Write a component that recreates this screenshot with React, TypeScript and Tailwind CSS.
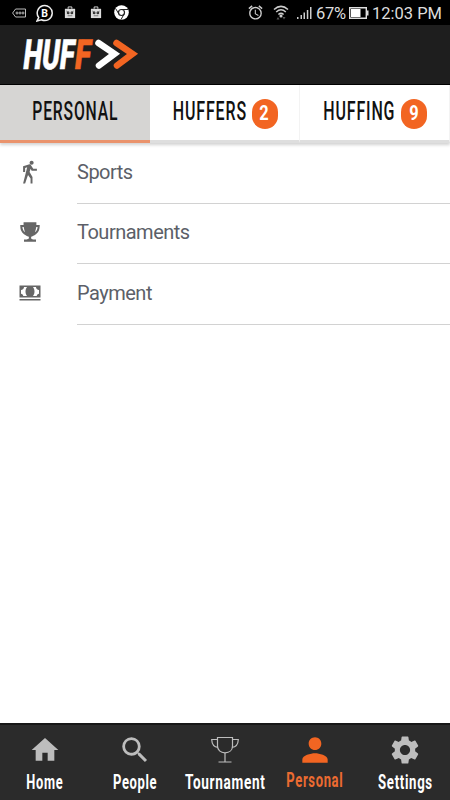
import type { ReactNode } from "react";
import clsx from "clsx";
import { MdAlarm, MdHome, MdPerson, MdSearch, MdSettings } from "react-icons/md";
import { IoMdCash, IoMdTrophy, IoMdWalk } from "react-icons/io";

const tabs = [
  { label: "PERSONAL", box: "w-[86px]", squeeze: "scale-x-[0.63]", active: true },
  { label: "HUFFERS", box: "w-[74px]", squeeze: "scale-x-[0.64]", count: 2 },
  { label: "HUFFING", box: "w-[73px]", squeeze: "scale-x-[0.64]", count: 9 },
];

const rows = [
  { label: "Sports", icon: <IoMdWalk className="-ml-px h-[26px] w-[26px]" /> },
  { label: "Tournaments", icon: <IoMdTrophy className="h-6 w-6" /> },
  { label: "Payment", icon: <IoMdCash className="h-6 w-6" /> },
];

const navItems = [
  { label: "Home", icon: <MdHome className="h-8 w-8" />, squeeze: "scale-x-[0.64]" },
  { label: "People", icon: <MdSearch className="h-[34px] w-[34px]" />, squeeze: "scale-x-[0.65]" },
  { label: "Tournament", icon: <TrophyOutline />, squeeze: "scale-x-[0.68]" },
  { label: "Personal", icon: <MdPerson className="h-[38px] w-[38px]" />, squeeze: "scale-x-[0.65]", active: true },
  { label: "Settings", icon: <MdSettings className="h-[34px] w-[34px]" />, squeeze: "scale-x-[0.66]" },
];

function TrophyOutline() {
  return (
    <svg className="h-7 w-7" viewBox="0 0 28 28" fill="none" stroke="currentColor" strokeWidth="1.2">
      <path d="M6.5 1.5h15v8.500c0 4-3 6.800-7.500 6.800S6.500 14 6.500 10z" />
      <path d="M6.500 3.500H.7c.2 4.500 2 7.500 6.300 7.800M21.500 3.500h5.800c-.2 4.500-2 7.500-6.300 7.800M14 17v8.500M7.500 26h13" />
    </svg>
  );
}

function Narrow({ box, squeeze, children }: { box?: string; squeeze: string; children: ReactNode }) {
  return (
    <span className={clsx("flex justify-center whitespace-nowrap", box)}>
      <span className={squeeze}>{children}</span>
    </span>
  );
}

function BagIcon() {
  return (
    <svg className="h-[13px] w-3" viewBox="0 0 12 14">
      <path d="M4 3V1h4v2" fill="none" stroke="#ddd" />
      <path d="M.5 3h11v10H.5z" fill="#ddd" />
      <circle cx="4" cy="7.500" r="1.500" fill="#333" />
      <circle cx="8" cy="7.500" r="1.500" fill="#333" />
      <path d="M2 5.500l3 1M10 5.500l-3 1M3.500 10.500h5" fill="none" stroke="#777" />
    </svg>
  );
}

function StatusBar() {
  return (
    <div className="flex h-[25px] items-center bg-black pl-3 pr-[9px] text-[#ddd]">
      <svg className="h-[10px] w-[14px]" viewBox="0 0 14 10" fill="none" stroke="#bbb">
        <path d="M.6 5l3-4h9.900v8H3.600z" />
        <circle cx="5" cy="5" r="1" />
        <circle cx="8" cy="5" r="1" />
        <circle cx="11" cy="5" r="1" />
      </svg>
      <svg className="ml-[10px] h-[18px] w-[17px]" viewBox="0 0 17 18">
        <path d="M2.700 13.500A7.500 7.500 0 1 1 5.500 15.800L1 17z" fill="none" stroke="#eee" strokeWidth="1.500" />
        <text x="8.700" y="12.600" textAnchor="middle" fill="#fff" fontFamily="Roboto, sans-serif" fontWeight="700" fontSize="10.500">B</text>
      </svg>
      <span className="ml-[11px]"><BagIcon /></span>
      <span className="ml-[14px]"><BagIcon /></span>
      <svg className="ml-3 h-[15px] w-[15px]" viewBox="0 0 15 15">
        <circle cx="7.500" cy="7.500" r="7.300" fill="#fff" />
        <circle cx="7.500" cy="7.500" r="3" fill="#fff" stroke="#222" strokeWidth="1.200" />
        <path d="M7.500 4.500H14M4.900 9L1.600 3.500M10.100 9L7 14.600" stroke="#222" />
      </svg>
      <div className="ml-auto flex items-center">
        <MdAlarm className="h-[17px] w-[17px] text-[#ccc]" />
        <svg className="ml-[9px] h-[17px] w-4" viewBox="0 0 16 17" fill="none" stroke="#ccc" strokeWidth="1.500">
          <path d="M1 5.500Q8-.8 15 5.500M3.200 8Q8 3.600 12.800 8M5.400 10.500Q8 8.300 10.600 10.500" />
          <circle cx="8" cy="12" r=".8" fill="#ccc" />
          <path d="M3.500 15.500h3L5 13zM9.500 13h3L11 15.500z" fill="#555" stroke="none" />
        </svg>
        <svg className="ml-2 h-3 w-[15px]" viewBox="0 0 15 12" fill="#ccc">
          <path d="M0 10h1.500v2H0zM3.500 8H5v4H3.500zM6.500 5.500H8V12H6.500zM9.800 3h1.500v9H9.800zM13 0h1.500v12H13z" />
        </svg>
        <span className="ml-1 mt-[3px] w-[30px] text-[16.500px] leading-none tracking-[-0.3px]">67%</span>
        <svg className="ml-[3px] h-3 w-5" viewBox="0 0 20 12">
          <path d="M.7.7h16.600v10.600H.7z" fill="none" stroke="#ddd" strokeWidth="1.400" />
          <path d="M2 2h9.500v8H2z" fill="#fff" />
          <path d="M18 3.500h1.500v5H18z" fill="#ddd" />
        </svg>
        <span className="ml-[3px] mt-[3px] w-[69px] whitespace-nowrap text-[16.500px] leading-none">12:03 PM</span>
      </div>
    </div>
  );
}

function Header() {
  return (
    <header className="flex h-[60px] items-center border-b border-black bg-[#1e1e1e] pl-[22px]">
      <svg className="h-[58px] w-[118px] overflow-visible" viewBox="0 0 118 58">
        <g transform="translate(0 43) skewX(-7)" fontFamily="Roboto, sans-serif" fontWeight="900" fontSize="41.500">
          <text x="0" y="0" fill="#fff" stroke="#fff" strokeWidth=".6" textLength="51" lengthAdjust="spacingAndGlyphs">HUF</text>
          <text x="51.500" y="0" fill="#f26522" stroke="#f26522" strokeWidth=".6" textLength="16" lengthAdjust="spacingAndGlyphs">F</text>
        </g>
        <path d="M76.500 17L92.500 27.800 77 39.500" fill="none" stroke="#fff" strokeWidth="6.500" strokeLinecap="round" />
        <path d="M94.500 17L110.500 27.800 95 39.500" fill="none" stroke="#f26522" strokeWidth="6.500" strokeLinecap="round" />
      </svg>
    </header>
  );
}

export default function App() {
  return (
    <div className="flex h-[800px] w-[450px] flex-col overflow-hidden bg-white font-['Roboto',sans-serif]">
      <StatusBar />
      <Header />

      <div className="grid h-[58px] grid-cols-3 shadow-[0_2px_3px_rgba(0,0,0,0.18)]">
        {tabs.map((tab) => (
          <div
            key={tab.label}
            className={clsx(
              "flex items-start justify-center gap-[5px] border-b-[3px] pt-3",
              tab.active ? "border-[#ea936c] bg-[#d6d5d3]" : "border-r border-b-[#dedede] border-r-[#f3f3f3] pl-px"
            )}
          >
            <div className="text-[25px] font-medium leading-[30px] tracking-[1.300px] text-[#111]">
              <Narrow box={tab.box} squeeze={tab.squeeze}>{tab.label}</Narrow>
            </div>
            {tab.count && (
              <span className="mt-[2px] flex h-[30px] w-[26px] items-center justify-center rounded-[13px] bg-[#f26522] text-[21px] font-bold text-white">
                <span className="scale-x-[0.78]">{tab.count}</span>
              </span>
            )}
          </div>
        ))}
      </div>

      <main className="flex-1 text-[#5c5f68]">
        {rows.map((row) => (
          <div key={row.label} className="flex h-[60.500px] items-stretch">
            <div className="flex w-[77px] items-center pb-[3px] pl-[18px] text-[#666]">{row.icon}</div>
            <div className="flex flex-1 items-center border-b border-[#d2d2d2] pb-[2px] text-[20px] tracking-[-0.5px]">{row.label}</div>
          </div>
        ))}
      </main>

      <nav className="grid h-[77px] grid-cols-5 border-t-2 border-[#171717] bg-[#2b2b2b]">
        {navItems.map((item) => (
          <div
            key={item.label}
            className={clsx("flex flex-col items-center", item.active ? "text-[#f26522]" : "text-[#bdbdbd]")}
          >
            <div className="mt-[7px] flex h-[36px] items-center justify-center">{item.icon}</div>
            <div className={clsx("text-[20px] font-bold leading-6 tracking-[1px]", item.active ? "text-[#ec6b31]" : "mt-[2px] text-white")}>
              <Narrow squeeze={item.squeeze}>{item.label}</Narrow>
            </div>
          </div>
        ))}
      </nav>
    </div>
  );
}
